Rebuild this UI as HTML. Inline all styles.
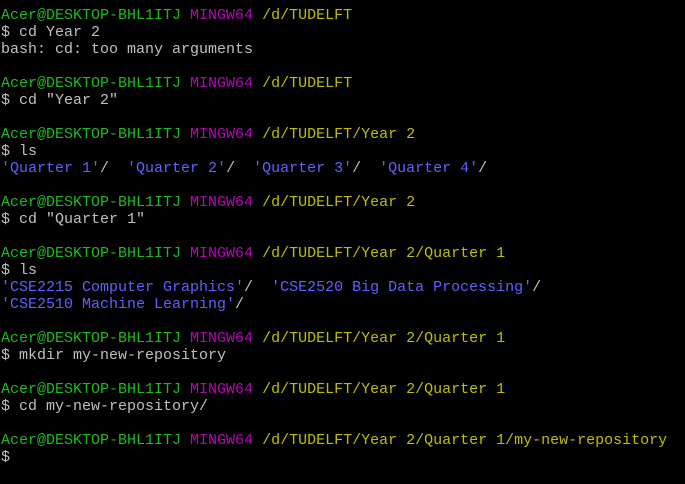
<!DOCTYPE html><html><head><style>
body{margin:0;background:#000;width:685px;height:484px;overflow:hidden}
pre{margin:0;position:absolute;left:1px;top:7px;font-family:"Liberation Mono",monospace;font-size:15px;line-height:17px;color:#c0c0c0}
.g{color:#1cbc1c}.m{color:#c000c0}.y{color:#bfbf00}.b{color:#6060ff}
</style></head><body><pre><span class="g">Acer@DESKTOP-BHL1ITJ</span> <span class="m">MINGW64</span> <span class="y">/d/TUDELFT</span>
$ cd Year 2
bash: cd: too many arguments

<span class="g">Acer@DESKTOP-BHL1ITJ</span> <span class="m">MINGW64</span> <span class="y">/d/TUDELFT</span>
$ cd "Year 2"

<span class="g">Acer@DESKTOP-BHL1ITJ</span> <span class="m">MINGW64</span> <span class="y">/d/TUDELFT/Year 2</span>
$ ls
<span class="b">'Quarter 1'</span>/  <span class="b">'Quarter 2'</span>/  <span class="b">'Quarter 3'</span>/  <span class="b">'Quarter 4'</span>/

<span class="g">Acer@DESKTOP-BHL1ITJ</span> <span class="m">MINGW64</span> <span class="y">/d/TUDELFT/Year 2</span>
$ cd "Quarter 1"

<span class="g">Acer@DESKTOP-BHL1ITJ</span> <span class="m">MINGW64</span> <span class="y">/d/TUDELFT/Year 2/Quarter 1</span>
$ ls
<span class="b">'CSE2215 Computer Graphics'</span>/  <span class="b">'CSE2520 Big Data Processing'</span>/
<span class="b">'CSE2510 Machine Learning'</span>/

<span class="g">Acer@DESKTOP-BHL1ITJ</span> <span class="m">MINGW64</span> <span class="y">/d/TUDELFT/Year 2/Quarter 1</span>
$ mkdir my-new-repository

<span class="g">Acer@DESKTOP-BHL1ITJ</span> <span class="m">MINGW64</span> <span class="y">/d/TUDELFT/Year 2/Quarter 1</span>
$ cd my-new-repository/

<span class="g">Acer@DESKTOP-BHL1ITJ</span> <span class="m">MINGW64</span> <span class="y">/d/TUDELFT/Year 2/Quarter 1/my-new-repository</span>
$
</pre></body></html>
